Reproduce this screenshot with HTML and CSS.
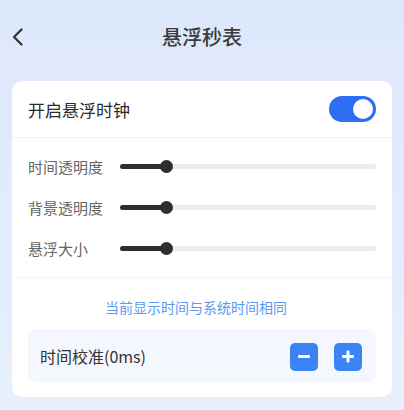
FILE: index.html
```html
<!DOCTYPE html>
<html lang="zh-CN">
<head>
  <meta charset="UTF-8">
  <meta name="viewport" content="width=device-width, initial-scale=1.0">
  <title>悬浮秒表</title>
  <link rel="stylesheet" href="styles.css">
</head>
<body>
  <div class="header">
    <svg class="back" width="14" height="20" viewBox="0 0 14 20">
      <path d="M10.5 2.5 L3 10 L10.5 17.5" fill="none" stroke="#333" stroke-width="2.3" stroke-linecap="round" stroke-linejoin="round"/>
    </svg>
    <div class="title">悬浮秒表</div>
  </div>

  <div class="card">
    <div class="switch-row">
      <span class="switch-label">开启悬浮时钟</span>
      <div class="switch on"><span class="switch-knob"></span></div>
    </div>

    <div class="sliders">
      <div class="slider-row">
        <span class="slider-label">时间透明度</span>
        <div class="slider">
          <div class="slider-fill" style="width: 18%"></div>
          <span class="slider-knob" style="left: 18%"></span>
        </div>
      </div>
      <div class="slider-row">
        <span class="slider-label">背景透明度</span>
        <div class="slider">
          <div class="slider-fill" style="width: 18%"></div>
          <span class="slider-knob" style="left: 18%"></span>
        </div>
      </div>
      <div class="slider-row">
        <span class="slider-label">悬浮大小</span>
        <div class="slider">
          <div class="slider-fill" style="width: 18%"></div>
          <span class="slider-knob" style="left: 18%"></span>
        </div>
      </div>
    </div>

    <div class="calibrate">
      <div class="hint">当前显示时间与系统时间相同</div>
      <div class="calibrate-box">
        <span class="calibrate-label">时间校准(0ms)</span>
        <div class="step-buttons">
          <button class="step-button"><span class="minus"></span></button>
          <button class="step-button"><span class="plus"></span></button>
        </div>
      </div>
    </div>
  </div>
</body>
</html>
```

FILE: styles.css
```css
body {
  margin: 0;
  height: 410px;
  font-family: 'Noto Sans CJK SC', 'Noto Sans', sans-serif;
  background: linear-gradient(180deg, #dee8fb 0%, #e3ecfc 60%, #e8f0fd 100%);
  overflow: hidden;
}

.header {
  height: 74px;
  display: flex;
  align-items: center;
  justify-content: center;
  position: relative;
}

.back {
  position: absolute;
  left: 11px;
  top: 27px;
}

.title {
  font-size: 20px;
  font-weight: 500;
  color: #3a3a3a;
  margin-top: -2px;
}

.card {
  margin: 7px 12px 0;
  background-color: #fff;
  border-radius: 10px;
}

.switch-row {
  height: 56px;
  padding: 0 16px;
  display: flex;
  align-items: center;
  justify-content: space-between;
  border-bottom: 1px solid #f1f2f4;
}

.switch-label {
  font-size: 17px;
  color: #2b2b2b;
}

.switch {
  width: 47px;
  height: 26px;
  border-radius: 13px;
  background-color: #ccc;
  position: relative;
}

.switch.on {
  background-color: #2c6ef4;
}

.switch-knob {
  position: absolute;
  top: 3px;
  left: 3px;
  width: 20px;
  height: 20px;
  border-radius: 50%;
  background-color: #fff;
}

.switch.on .switch-knob {
  left: 24px;
}

.sliders {
  padding: 8px 16px 8px;
  border-bottom: 1px solid #f3f4f6;
}

.slider-row {
  height: 41px;
  display: flex;
  align-items: center;
}

.slider-label {
  width: 92px;
  flex: none;
  font-size: 15px;
  color: #666;
}

.slider {
  flex: 1;
  height: 5px;
  border-radius: 3px;
  background-color: #ececec;
  position: relative;
}

.slider-fill {
  height: 100%;
  border-radius: 3px;
  background-color: #2e2e2e;
}

.slider-knob {
  position: absolute;
  top: 50%;
  width: 13px;
  height: 13px;
  margin: -6.5px 0 0 -6.5px;
  border-radius: 50%;
  background-color: #2e2e2e;
}

.calibrate {
  padding: 19px 16px 15px;
}

.hint {
  height: 20px;
  line-height: 20px;
  padding-right: 12px;
  text-align: center;
  font-size: 14px;
  color: #5d97ee;
  margin-bottom: 12px;
}

.calibrate-box {
  height: 53px;
  padding: 0 14px 0 12px;
  border-radius: 8px;
  background-color: #f4f7fd;
  display: flex;
  align-items: center;
  justify-content: space-between;
}

.calibrate-label {
  font-size: 16px;
  color: #333;
}

.step-buttons {
  display: flex;
  gap: 16px;
  margin-top: 2px;
}

.step-button {
  width: 28px;
  height: 28px;
  padding: 0;
  border: none;
  border-radius: 5px;
  background-color: #3c84f4;
  position: relative;
}

.minus,
.plus::before,
.plus::after {
  position: absolute;
  left: 50%;
  top: 50%;
  width: 12px;
  height: 3px;
  margin: -1.5px 0 0 -6px;
  border-radius: 1px;
  background-color: #fff;
}

.plus::before,
.plus::after {
  content: '';
}

.plus::after {
  transform: rotate(90deg);
}
```
